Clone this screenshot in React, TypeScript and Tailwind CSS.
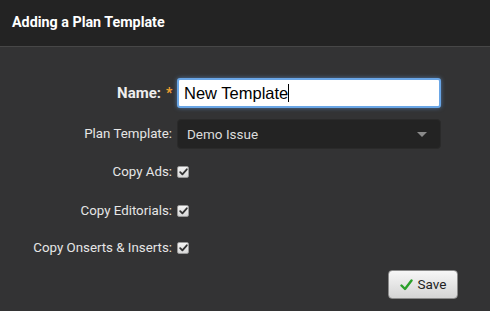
import React from "react";

function Check() {
  return (
    <span className="flex h-[12px] w-[12px] items-center justify-center rounded-[2px] border border-[#999] bg-gradient-to-b from-[#f4f4f4] to-[#d8d8d8]">
      <svg width="9" height="8" viewBox="0 0 9 8">
        <path d="M1.2 4.2 L3.4 6.4 L7.8 1.3" fill="none" stroke="#333" strokeWidth="1.8" strokeLinecap="round" strokeLinejoin="round" />
      </svg>
    </span>
  );
}

function Row({ label, children, className = "" }: { label: React.ReactNode; children: React.ReactNode; className?: string }) {
  return (
    <div className={`flex items-center ${className}`}>
      <div className="flex w-[172px] shrink-0 items-center justify-end text-[13.3px] text-[#e6e6e6]">{label}</div>
      <div className="ml-[5px] flex items-center">{children}</div>
    </div>
  );
}

export default function App() {
  return (
    <div className="h-[311px] w-[490px] overflow-hidden bg-[#333334]" style={{ fontFamily: "Roboto, 'Liberation Sans', sans-serif" }}>
      <div className="flex h-[47px] items-center border-b border-[#474747] bg-[#232323] px-[12px]">
        <span className="text-[14.3px] font-bold text-white">Adding a Plan Template</span>
      </div>
      <div className="flex flex-col pt-[31px]">
        <Row label={<><span className="text-[15px] font-bold text-[#eee]">Name:</span><span className="ml-[5px] w-[6px] text-[14px] font-bold text-[#f0a030]">*</span></>}>
          <div className="flex h-[30px] w-[264px] items-center rounded-[3px] border-2 border-[#6aa6e6] bg-white px-[5px] shadow-[0_0_4px_rgba(100,160,230,0.6)]">
            <span className="text-[16.5px] text-black" style={{ fontFamily: "'Liberation Sans', Arial, sans-serif" }}>New Template</span>
            <span className="h-[18px] w-[1px] bg-black" />
          </div>
        </Row>
        <Row label="Plan Template:" className="mt-[11px]">
          <div className="flex h-[30px] w-[264px] items-center justify-between rounded-[4px] border border-[#2a2a2a] bg-[#232323] pl-[9px] pr-[13px]">
            <span className="text-[13.5px] text-[#dcdcdc]">Demo Issue</span>
            <span className="h-0 w-0 border-x-[5px] border-t-[5px] border-x-transparent border-t-[#8a8a8a]" />
          </div>
        </Row>
        <Row label="Copy Ads:" className="mt-[15px] h-[16px]">
          <Check />
        </Row>
        <Row label="Copy Editorials:" className="mt-[23px] h-[16px]">
          <Check />
        </Row>
        <Row label="Copy Onserts & Inserts:" className="mt-[21px] h-[16px]">
          <Check />
        </Row>
        <div className="flex justify-end pr-[32px] pt-[14px]">
          <button className="flex h-[29px] w-[70px] items-center justify-center gap-[5px] rounded-[4px] border border-[#8a8a8a] bg-gradient-to-b from-[#f7f7f7] to-[#d4d4d4] text-[13.5px] text-[#222]">
            <svg width="13" height="12" viewBox="0 0 13 12">
              <path d="M1.5 6.5 L5 10 L11.5 1.5" fill="none" stroke="#2aa02a" strokeWidth="2.4" strokeLinecap="round" strokeLinejoin="round" />
            </svg>
            <span>Save</span>
          </button>
        </div>
      </div>
    </div>
  );
}
